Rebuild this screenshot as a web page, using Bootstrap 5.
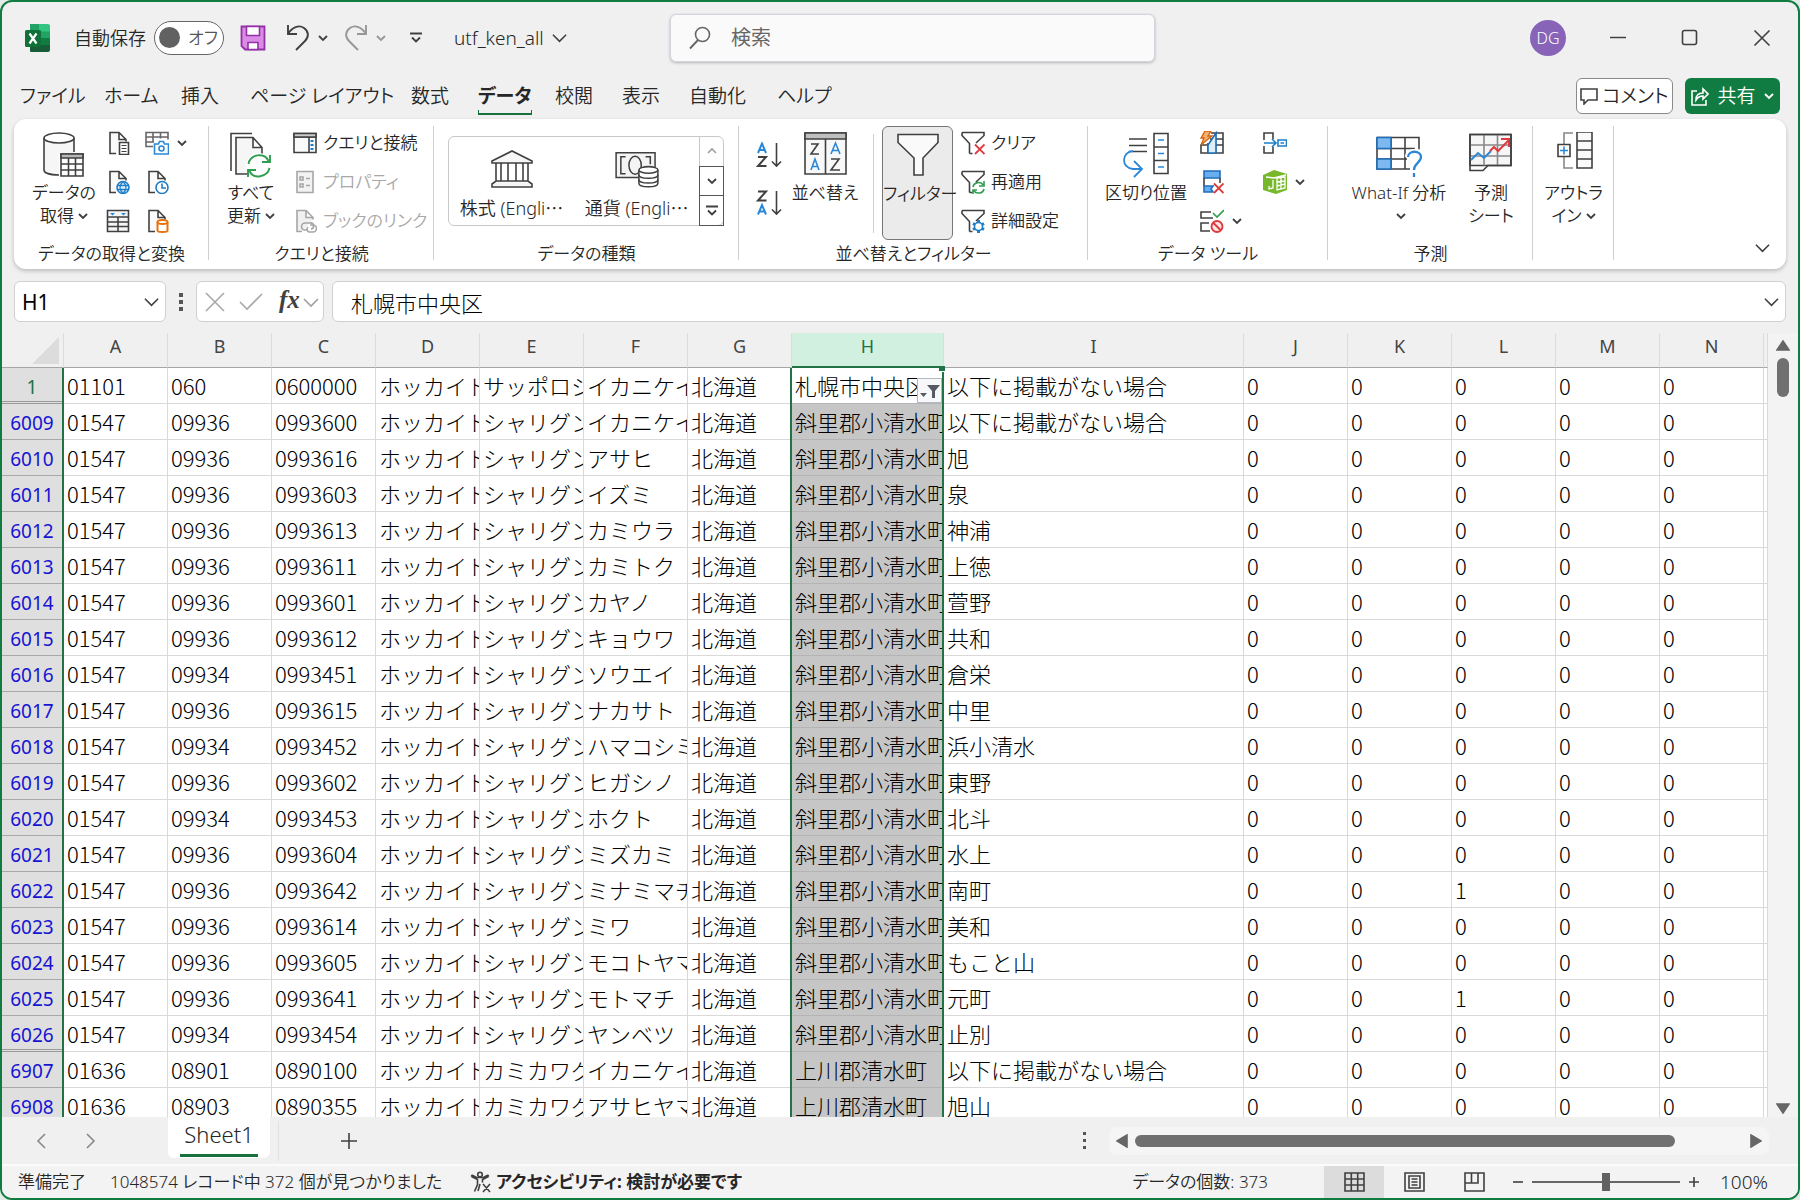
<!DOCTYPE html>
<html lang="ja">
<head>
<meta charset="utf-8">
<meta name="viewport" content="width=device-width, initial-scale=1">
<title>utf_ken_all - Excel</title>
<link href="https://cdn.jsdelivr.net/npm/bootstrap@5.3.0/dist/css/bootstrap.min.css" rel="stylesheet">
<style>
:root{--xl:#107c41;--ink:#262626;--blue:#2b88d8;--line:#d9d9d9}
body{background:#e3ebe6;font-family:"Noto Sans","Noto Sans CJK JP",sans-serif;font-size:18px;font-weight:350;line-height:24px;color:var(--ink)}
button{font:inherit;color:inherit;background:none;border:0;padding:0}
svg{flex:none;display:block;fill:none;stroke:#404040;stroke-width:1.6}
.appframe{border:2px solid var(--xl);border-radius:12px;background:#f0f0f0;overflow:hidden}
.appframe>*{flex-shrink:0}
.ui{font-feature-settings:"palt"}
/* title bar */
.titlebar{height:71px;padding:0 0 0 23px}
.autosave{width:70px;height:34px;border:1px solid #666;border-radius:17px;background:#fff;color:#555;font-size:17px;padding-left:4px;gap:8px}
.autosave input{appearance:none;width:21px;height:21px;border-radius:50%;background:#616161;margin:0}
.docname{font-size:19px}
.searchbox{position:absolute;left:50%;top:12px;width:27%;margin-left:-230px;height:48px;background:#fafafa;border:1px solid #d4d4dc;border-radius:6px;box-shadow:0 1px 3px rgba(0,0,0,.25);padding-left:18px;gap:20px}
.searchbox input,.fxinput,.namebox input{border:0;background:none;outline:0;min-width:0;padding:0}
.searchbox input{font-size:20px}
.searchbox input::placeholder{color:#666}
.avatar{width:36px;height:36px;border-radius:50%;background:#8764b8;color:#fff;font-size:16px}
.wbtn{width:72px;height:48px}
/* ribbon tabs */
.tabrow{height:46px;padding:0 18px}
.tabgrid{display:grid;grid-template-columns:84px 77px 69px 161px 67px 77px 67px 67px 88px 60px;font-size:19px;line-height:28px}
.tabgrid a{color:var(--ink);text-decoration:none;white-space:nowrap}
.tabgrid a.current span{display:inline-block;font-weight:700;box-shadow:0 4px 0 -1px #f0f0f0,0 5px 0 0 #18703c}
.combtn{width:97px;height:36px;border:1px solid #8a8a8a;border-radius:6px;background:#fff;font-size:19px}
.sharebtn{width:95px;height:36px;border-radius:6px;background:var(--xl);color:#fff;font-size:19px}
/* ribbon */
.ribbon{margin:0 12px;height:150px;background:#fff;border-radius:12px;box-shadow:0 2px 4px rgba(0,0,0,.22);font-size:17px}
.rgroup{position:relative;padding-top:7px}
.rgroup::after{content:"";position:absolute;right:0;top:7px;bottom:9px;border-right:1px solid #cfcfcf}
.rbody{height:115px}
.rlabel{text-align:center;line-height:26px}
.bigbtn{width:76px;align-self:flex-start;padding-top:6px;line-height:23px;white-space:nowrap}
.bigbtn svg{margin:0 auto 3px}
.bigbtn svg.chev{display:inline-block;margin:0 0 2px 4px}
.smallgrid{display:grid;grid-template-rows:repeat(3,34px);row-gap:5px;align-content:start;justify-content:start}
.smallgrid button{display:flex;align-items:center;gap:6px;white-space:nowrap}
.smallgrid button.wide{gap:8px}
.smallgrid button:disabled{color:#a8a8a8}
.gallery{width:276px;height:90px;margin:10px 0 0 14px;border:1px solid #c8c8c8;border-radius:6px}
.gallery .gitem{width:126px;font-size:18px;white-space:nowrap}
.gspin{width:24px}
.gspin button{flex:1;border-left:1px solid #c8c8c8}
.gspin button+button{border:1px solid #555;margin:0 -1px -1px 0}
.filterbtn{width:71px;border:1px solid #777;border-radius:6px;background:#ebebeb;padding-bottom:34px}
.filtersep{border-left:1px solid #d0d0d0;margin:8px 0 8px 10px}
/* formula bar */
.fbar{padding:12px 12px 11px;height:64px}
.fbox{height:41px;background:#fff;border:1px solid #d0d0d0;border-radius:6px}
.namebox{width:152px;padding:0 6px 0 7px}
.namebox input{width:100px;font-size:21px}
.fxtools{width:128px;gap:14px;padding-left:8px}
.fxline{padding:0 6px 0 18px}
.fxinput{font:300 22px/30px "Noto Sans CJK JP",sans-serif}
/* grid */
.gridwrap{min-height:0;overflow:hidden;flex:1 1 0}
.sheetgrid{table-layout:fixed;width:100%;border-collapse:separate;border-spacing:0;font:300 22px/34px "Noto Sans CJK JP",sans-serif;color:#000}
.sheetgrid td,.sheetgrid th{height:36px;padding:0;border-right:1px solid var(--line);border-bottom:1px solid var(--line);overflow:hidden;white-space:nowrap}
.sheetgrid td{background:#fff;padding-left:3px;padding-bottom:1px}
.sheetgrid thead th{height:35px;font:400 18px/26px "Noto Sans","Noto Sans CJK JP",sans-serif;color:#444;text-align:center;vertical-align:top;background:#f0f0f0;border-bottom:1px solid #a6a6a6;border-right-color:#dcdcdc}
.sheetgrid thead th.selcol{background:#d2f0e0;color:#217346;border-bottom:2px solid #217346}
.sheetgrid tbody th{background:#dfdfdf;color:#1414d2;font:400 19px/33px "Noto Sans",sans-serif;text-align:center;padding-top:3px;border-right:2px solid #217346;border-bottom:0;box-shadow:inset 0 -1px #a9a9a9}
.sheetgrid tbody tr.brk th{box-shadow:inset 0 -1px #999,inset 0 -2px #dfdfdf,inset 0 -3px #999}
.sheetgrid tbody tr:first-child th{color:#217346}
.sheetgrid td.colg{border-right:2px solid #217346;border-bottom:0;padding-bottom:2px;box-shadow:inset 0 -1px var(--line)}
.sheetgrid td.selcell{background:#c6c6c6;border-right:2px solid #217346;border-bottom:0;padding-bottom:2px;box-shadow:inset 0 -1px #b4b4b4;position:relative}
.sheetgrid tr:first-child td.selcell{background:#fff;overflow:visible}
.fillknob{position:absolute;right:-3px;top:-2px;width:6px;height:6px;background:#217346;border-bottom:1px solid #fff}
.filtmark{position:absolute;right:0;bottom:1px;width:25px;height:25px;background:#f8f8fa;border:1px solid #b4b8c4}
.selall svg{margin:4px 0 0 30px}
.vscroll{flex:0 0 30px;background:#f3f3f3;padding:7px 0 3px}
.vthumb{width:12px;height:39px;border-radius:6px;background:#707070;margin-top:7px}
/* bottom */
.sheetbar{height:47px;padding:0 29px 0 2px}
.sheettab{width:102px;height:41px;background:#fff;border-radius:0 0 6px 6px;font-size:22px;line-height:30px;margin-left:72px}
.sheettab span{display:inline-block;width:78px;height:38px;border-bottom:3px solid #18703c}
.htrack{width:660px;max-width:50%;height:28px;border-radius:8px;background:#f5f5f5;padding:0 7px}
.hthumb{width:540px;height:12px;border-radius:6px;background:#707070;margin-left:7px}
.statusbar{height:34px;background:#f3f3f3;border-top:2px solid #fbfbfb;padding:0 30px 0 16px;font-size:17px}
.viewbtn{width:60px;height:32px}
.viewbtn.on{background:#dcdcdc}
.zoomrange{appearance:none;width:148px;height:18px;background:linear-gradient(#666,#666) center/100% 2px no-repeat;margin:0 8px}
.zoomrange::-webkit-slider-thumb{appearance:none;width:8px;height:18px;background:#616161;border:0}
.zoompct{font-size:19px;margin-left:20px}
</style>
<script src="https://cdn.jsdelivr.net/npm/bootstrap@5.3.0/dist/js/bootstrap.bundle.min.js"></script>
</head>
<body>
<svg width="0" height="0" class="position-absolute">
<defs>
<symbol id="cv" viewBox="0 0 10 8"><path d="M1 2l4 4 4-4" stroke-width="1.8"/></symbol>
<symbol id="cvl" viewBox="0 0 16 10"><path d="M1 1.500l7 7 7-7" stroke-width="1.7"/></symbol>
<symbol id="funnel" viewBox="0 0 24 24"><path d="M1 1.500h22v3L15 12M8.500 22.500v-10L1 4.500v-3M8.500 22.500h3"/></symbol>
<symbol id="page" viewBox="0 0 24 24"><path d="M10 22.500H4V1.500h9l7 7v2M13 1.500v7h7" fill="#fafafa"/></symbol>
</defs>
</svg>
<div class="appframe vh-100 d-flex flex-column ui">

<header class="titlebar d-flex align-items-center position-relative">
  <svg width="25" height="28" viewBox="0 0 25 28" style="stroke:none"><path d="M5 0h10v9H5z" fill="#21a366"/><path d="M14 0h9a2 2 0 0 1 2 2v6H14z" fill="#33c481"/><path d="M14 7.500h11v7H14z" fill="#21a366"/><path d="M5 7.500h10v7H5z" fill="#107c41"/><path d="M14 14h11v7H14z" fill="#107c41"/><path d="M5 14h10v7h10v5a2 2 0 0 1-2 2H6a1 1 0 0 1-1-1z" fill="#185c37"/><rect y="6" width="16" height="17" rx="1.500" fill="#0f7038"/><path d="M4.500 9.500L11.500 19.500M11.500 9.500L4.500 19.500" stroke="#fff" stroke-width="2.200"/></svg>
  <label for="autosave" class="ms-4">自動保存</label>
  <label class="autosave d-flex align-items-center ms-2"><input type="checkbox" role="switch" id="autosave"><span>オフ</span></label>
  <button class="ms-3" aria-label="上書き保存"><svg width="26" height="26" viewBox="0 0 25 26"><path d="M1 1.500h23v23H4.500L1 21z" fill="#d98be6" stroke="#9332a5" stroke-width="1.800"/><path d="M6 1.500h13v9H6z" fill="#fff" stroke="#9332a5"/><path d="M7.500 24.500v-7h10v7z" fill="#fff" stroke="#9332a5"/></svg></button>
  <button class="ms-3 ps-1 d-flex align-items-center gap-2" aria-label="元に戻す"><svg width="24" height="28" viewBox="0 0 24 28"><path d="M2 1v9h9M2 10C6 3 13 .500 18 4s5 9 1 13L10 26" stroke-width="1.900"/></svg><svg class="chev" width="10" height="8"><use href="#cv"/></svg></button>
  <button class="ms-3 d-flex align-items-center gap-2 opacity-50" aria-label="やり直し" disabled><svg width="24" height="28" viewBox="0 0 24 28"><path d="M22 1v9h-9M22 10C18 3 11 .500 6 4s-5 9-1 13l9 9" stroke-width="1.900"/></svg><svg class="chev" width="10" height="8"><use href="#cv"/></svg></button>
  <button class="ms-4" aria-label="クイック アクセス ツール バー"><svg width="12" height="12" viewBox="0 0 12 12"><path d="M0 1.500h12M2 5.500l4 4 4-4" stroke-width="1.900"/></svg></button>
  <button class="docname d-flex align-items-center gap-2 ms-4 ps-2">utf_ken_all<svg width="15" height="10"><use href="#cvl"/></svg></button>
  <div class="searchbox d-flex align-items-center"><svg width="22" height="24" viewBox="0 0 22 24"><circle cx="13.500" cy="8.500" r="7" stroke="#666"/><path d="M9 14L1 22.500" stroke="#666" stroke-width="1.900"/></svg><input type="text" class="flex-grow-1" placeholder="検索" aria-label="検索"></div>
  <div class="d-flex align-items-center ms-auto">
    <button class="avatar me-3">DG</button>
    <button class="wbtn d-flex align-items-center justify-content-center" aria-label="最小化"><svg width="18" height="18"><path d="M1 8.500h16"/></svg></button>
    <button class="wbtn d-flex align-items-center justify-content-center" aria-label="最大化"><svg width="18" height="18"><rect x="1.500" y="1.500" width="14" height="14" rx="2"/></svg></button>
    <button class="wbtn d-flex align-items-center justify-content-center" aria-label="閉じる"><svg width="18" height="18"><path d="M1.500 1.500l15 15M16.500 1.500l-15 15"/></svg></button>
  </div>
</header>

<div class="tabrow d-flex align-items-center">
  <nav class="tabgrid"><a href="#">ファイル</a><a href="#">ホーム</a><a href="#">挿入</a><a href="#">ページ レイアウト</a><a href="#">数式</a><a href="#" class="current"><span>データ</span></a><a href="#">校閲</a><a href="#">表示</a><a href="#">自動化</a><a href="#">ヘルプ</a></nav>
  <div class="d-flex ms-auto">
    <button class="combtn d-flex align-items-center justify-content-center gap-1 me-2"><svg width="18" height="18" viewBox="0 0 18 18"><path d="M1 2h16v11H8l-4 4v-4H1z"/></svg>コメント</button>
    <button class="sharebtn d-flex align-items-center justify-content-center gap-2 ms-1"><svg width="18" height="19" viewBox="0 0 18 19"><path d="M6 4H1v14h14v-5M5 13c0-5 3-7 7-7V2l5 5-5 5V9c-3 0-5 1-7 4z" stroke="#fff"/></svg>共有<svg class="chev" width="10" height="8" style="stroke:#fff"><use href="#cv"/></svg></button>
  </div>
</div>

<section class="ribbon d-flex">
  <div class="rgroup" style="width:195px">
    <div class="rbody d-flex ps-2">
      <button class="bigbtn ms-1"><svg width="46" height="46" viewBox="0 0 46 46"><path d="M3 6v32c0 3 6 5 15 5V22h15V6z" fill="#f6f6f6" stroke="none"/><path d="M3 6v32c0 3 6 5 15 5M33 6v14"/><ellipse cx="18" cy="6" rx="15" ry="5" fill="#fff"/><path d="M20 22h22v22H20z" fill="#fff"/><path d="M20 22h22v4H20z" fill="#b8b8b8"/><path d="M20 32h22M20 38h22M27.500 26v18M34.500 26v18"/></svg>データの<br>取得<svg class="chev" width="10" height="8"><use href="#cv"/></svg></button>
      <div class="smallgrid ms-1" style="grid-template-columns:24px 50px;column-gap:15px">
        <button aria-label="テキストまたは CSV から"><svg width="24" height="24"><use href="#page"/><path d="M13.500 11.500h9v12h-9z" fill="#fff"/><path d="M15.500 14.500h5M15.500 17.500h5M15.500 20.500h5" stroke-width="1.200"/></svg></button>
        <button class="wide" aria-label="画像から"><svg width="24" height="24"><path d="M8 15.500H1v-14h22v7M1 6h22M1 11h8M8 1.500v10M15.500 1.500v6" stroke="#666"/><path d="M9.500 13h4l1-2.500h4l1 2.500h4v10h-14z" fill="#fff" stroke="#2b88d8"/><circle cx="16.500" cy="17.500" r="2.500" stroke="#2b88d8"/></svg><svg class="chev" width="10" height="8"><use href="#cv"/></svg></button>
        <button aria-label="Web から"><svg width="24" height="24"><use href="#page"/><circle cx="17" cy="17.500" r="6" fill="#e2f1fb" stroke="#1e7ec8"/><path d="M11 15.500h12M11 19.500h12M17 11.500c-4 4-4 8 0 12M17 11.500c4 4 4 8 0 12" stroke="#1e7ec8" stroke-width="1.300"/></svg></button>
        <button aria-label="最近使ったソース"><svg width="24" height="24"><use href="#page"/><circle cx="17" cy="17.500" r="6" fill="#fff" stroke="#1e7ec8"/><path d="M17 13.500v4.500h4" stroke="#1e7ec8"/></svg></button>
        <button aria-label="テーブルまたは範囲から"><svg width="24" height="24"><path d="M1.500 1.500h21v21h-21z" fill="#f4f4f4"/><path d="M1.500 8h21M1.500 13h21M1.500 17.500h21M12 8v14.500"/><path d="M4 4h5L6.500 6.500zM15 4h5l-2.500 2.500z" fill="#2b88d8" stroke="none"/></svg></button>
        <button aria-label="既存の接続"><svg width="24" height="24"><use href="#page"/><path d="M12.500 13v8.500c0 2 10 2 10 0V13" fill="#fff" stroke="#e8710a" stroke-width="2"/><ellipse cx="17.500" cy="13" rx="5" ry="2" fill="#fff" stroke="#e8710a" stroke-width="2"/></svg></button>
      </div>
    </div>
    <div class="rlabel">データの取得と変換</div>
  </div>
  <div class="rgroup" style="width:225px">
    <div class="rbody d-flex ps-1">
      <button class="bigbtn"><svg width="46" height="46" viewBox="0 0 46 46"><path d="M3 39V1.500h21"/><path d="M24 42H8V5.500h17l9 10v7M25 5.500v10h9" fill="#f6f6f6"/><circle cx="31" cy="34" r="13" fill="#fff" stroke="none"/><path d="M20.500 32c1.500-10 16-12 20-3M42 23v7h-8M41.500 36c-2 9-16 12-20 3M20 45v-7h8" stroke="#2f9e4f" stroke-width="1.900"/></svg>すべて<br>更新<svg class="chev" width="10" height="8"><use href="#cv"/></svg></button>
      <div class="smallgrid ms-1">
        <button><svg width="24" height="24"><path d="M1 2.500h22v19H1zM1 6h22" fill="#fafafa"/><path d="M1 2.500h22V6H1z" fill="#ccc"/><path d="M16 6v15.500"/><path d="M19 9v2m0 2v2m0 2v2" stroke="#1e7ec8" stroke-width="3"/></svg>クエリと接続</button>
        <button disabled><svg width="24" height="24" style="stroke:#a6a6a6"><path d="M4 1.500h16v21H4z" fill="#f2f2f2"/><path d="M7 7h3v3H7zM7 14h3v3H7zM13 8.500h4M13 15.500h4"/></svg>プロパティ</button>
        <button disabled><svg width="24" height="24" style="stroke:#a6a6a6"><path d="M9 22.500H4V1.500h9l7 7v2M13 1.500v7h7" fill="#f0f0f0"/><path d="M14 21h-2a3 3 0 0 1 0-7h5a3 3 0 0 1 1 6M17 16h3a3 3 0 0 1 0 7h-4a3 3 0 0 1-1-5"/></svg>ブックのリンク</button>
      </div>
    </div>
    <div class="rlabel">クエリと接続</div>
  </div>
  <div class="rgroup" style="width:305px">
    <div class="rbody d-flex align-items-start">
      <div class="gallery d-flex">
        <button class="gitem"><svg class="mx-auto mt-2" width="42" height="38" viewBox="0 0 42 38"><path d="M1 11L21 1l20 10v2H1zM5 13v18M10 13v18M17 13v18M25 13v18M32 13v18M37 13v18M5 31h32l4 3v3H1v-3z" fill="#f6f6f6"/></svg><span class="d-block mt-2">株式 (Engli⋯</span></button>
        <button class="gitem"><svg class="mx-auto mt-2" width="46" height="38" viewBox="0 0 46 40"><path d="M1 3h41v26H1z" fill="#f4f4f4"/><path d="M11 7H6v18h5M32 7h5v8"/><ellipse cx="21" cy="16" rx="6.500" ry="9.500"/><path d="M25 21v14c0 5 20 5 20 0V21" fill="#fff"/><ellipse cx="35" cy="21" rx="10" ry="3.500" fill="#fff"/><path d="M25 26c0 5 20 5 20 0M25 31c0 5 20 5 20 0"/></svg><span class="d-block mt-2">通貨 (Engli⋯</span></button>
        <div class="gspin d-flex flex-column ms-auto">
          <button aria-label="上へ" disabled><svg class="mx-auto opacity-50" width="10" height="8"><path d="M1 6l4-4 4 4"/></svg></button>
          <button aria-label="下へ"><svg class="mx-auto" width="10" height="8"><use href="#cv"/></svg></button>
          <button aria-label="その他"><svg class="mx-auto" width="12" height="12" viewBox="0 0 12 12"><path d="M0 1.500h12M2 5.500l4 4 4-4" stroke-width="1.900"/></svg></button>
        </div>
      </div>
    </div>
    <div class="rlabel">データの種類</div>
  </div>
  <div class="rgroup" style="width:349px">
    <div class="rbody d-flex ps-3">
      <div class="d-flex flex-column pt-3" style="gap:22px">
        <button aria-label="昇順"><svg width="28" height="26" viewBox="0 0 28 26"><path d="M3 11L7 1.500 11 11M4.500 8h5" stroke="#2b88d8" stroke-width="2"/><path d="M3 15h8L3 24h8.500" stroke-width="2"/><path d="M21.500 1v23M17 19.500l4.500 4.500 4.500-4.500"/></svg></button>
        <button aria-label="降順"><svg width="28" height="26" viewBox="0 0 28 26"><path d="M3 1.500h8L3 10.500h8.500" stroke-width="2"/><path d="M3 24.500L7 15 11 24.500M4.500 21.500h5" stroke="#2b88d8" stroke-width="2"/><path d="M21.500 1v23M17 19.500l4.500 4.500 4.500-4.500"/></svg></button>
      </div>
      <button class="bigbtn ms-1"><svg width="46" height="46" viewBox="0 0 46 46"><path d="M3 1h41v41H3z" fill="#f8f8f8"/><path d="M3 1h41v6H3z" fill="#bfbfbf"/><path d="M23.500 7v35M9 12h7l-7 10h8"/><path d="M9 38l4-11 4 11M10.500 34.500h5M29 22l4.500-11L38 22M30.500 18.500h6" stroke="#2b88d8"/><path d="M29 27h8l-8 11h9"/></svg>並べ替え</button>
      <div class="filtersep"></div>
      <button class="bigbtn filterbtn ms-2"><svg width="46" height="46" viewBox="0 0 46 46"><path d="M3 1.500h40v8L28 25v17h-9V25L3 9.500z" fill="#fafafa"/></svg>フィルター</button>
      <div class="smallgrid ms-2">
        <button><svg width="24" height="24"><use href="#funnel"/><path d="M14 13.500l9.500 9.500M23.500 13.500L14 23" stroke="#e03a3e" stroke-width="1.800"/></svg>クリア</button>
        <button><svg width="24" height="24"><use href="#funnel"/><path d="M12 17c1-5 8-6 10-2M23 11v5h-5M23 19c-1 5-8 5-10 2M12 24v-4h4" stroke="#2f9e4f"/></svg>再適用</button>
        <button><svg width="24" height="24"><use href="#funnel"/><path d="M17.500 11v13M12 14.500l11 6M12 20.500l11-6" stroke="#1e7ec8" stroke-width="3"/><circle cx="17.500" cy="17.500" r="4" stroke="#1e7ec8" fill="#fff"/></svg>詳細設定</button>
      </div>
    </div>
    <div class="rlabel">並べ替えとフィルター</div>
  </div>
  <div class="rgroup" style="width:240px">
    <div class="rbody d-flex ps-3">
      <button class="bigbtn" style="width:84px"><svg width="46" height="46" viewBox="0 0 46 46"><path d="M6 7h18M6 13.500h18M6 19.500h18"/><path d="M31 1.500h14v40H31zM31 15h14M31 28.500h14"/><path d="M35 8h6M35 21.500h6M35 35h6" stroke="#2b88d8"/><path d="M10 19C-2 20-2 36 10 37h8M11 29l8 8-8 8" stroke="#2b88d8" stroke-width="1.800"/></svg>区切り位置</button>
      <div class="smallgrid" style="grid-template-columns:63px 50px;margin-left:12px">
        <button aria-label="フラッシュ フィル"><svg width="24" height="24"><path d="M11 2h12v20H1v-8h22M8 12v10M15.500 2v20M10 8h13"/><path d="M12 8l4-6v20H8v-8z" fill="#dbeefb" stroke="#1e6fb8"/><path d="M5 0h6L8 5h4L1 14l3-7H1z" fill="#f0b070" stroke="#d8600a" stroke-width="1.300"/></svg></button>
        <button aria-label="統合"><svg width="24" height="24"><path d="M1 8V2h9v6M1 16v6h9v-6M1 8v1M1 15v1"/><path d="M1 12h11M9 8l4 4-4 4M15 9h8.500v6H15zM17.500 12H21" stroke="#1e7ec8"/></svg></button>
        <button aria-label="重複の削除"><svg width="24" height="24"><path d="M4 1h16v7H4z" fill="#69aef0" stroke="#1e6fb8"/><path d="M4 8v8M20 8v5"/><path d="M4 16h9l-2 3 2 3H4z" fill="#69aef0" stroke="#1e6fb8"/><path d="M14 13.500l9.500 9.500M23.500 13.500L14 23" stroke="#e03a3e" stroke-width="1.800"/></svg></button>
        <button class="wide" aria-label="データ モデル"><svg width="24" height="24" viewBox="0 0 24 24"><path d="M0 5L11 0l13 4v16l-11 4L0 20z" fill="#76b82a" stroke="none"/><path d="M10 10v8l-4 1v-3M14 8l8-1v11l-8 2zM18 7.500V19M14 12l8-1M14 16l8-2M3 7l8 1 12-3" stroke="#fff" stroke-width="1.300"/></svg><svg class="chev" width="10" height="8"><use href="#cv"/></svg></button>
        <button class="wide" aria-label="データの入力規則"><svg width="24" height="24"><path d="M11 3H1v6h12M9 14H1v8h9"/><path d="M13 4l4 4 7-7" stroke="#2f9e4f"/><circle cx="17" cy="17.500" r="5.500" fill="#fbe6e6" stroke="#e03a3e" stroke-width="1.900"/><path d="M13 13.500l8 8" stroke="#e03a3e" stroke-width="1.900"/></svg><svg class="chev" width="10" height="8"><use href="#cv"/></svg></button>
      </div>
    </div>
    <div class="rlabel">データ ツール</div>
  </div>
  <div class="rgroup" style="width:205px">
    <div class="rbody d-flex" style="padding-left:13px">
      <button class="bigbtn" style="width:116px"><svg width="46" height="46" viewBox="0 0 46 46"><path d="M1 5.500h42v12M34 37H1V5.500M1 16.500h38M1 27h30M15 5.500V37M29 5.500V37"/><path d="M1 5.500h14v11H1zM1 27h14v10H1z" fill="#7db8f0" stroke="#1e6fb8"/><path d="M32 25c0-7 14-7 14 0 0 6-8 6-8 13M38 41v4" stroke="#fff" stroke-width="6"/><path d="M32 25c0-7 13-7 13 0 0 6-7 6-7 13M38 41v4" stroke="#2b88d8" stroke-width="2.300"/></svg>What-If 分析<br><svg class="chev" width="10" height="8"><use href="#cv"/></svg></button>
      <button class="bigbtn ms-1" style="width:60px"><svg width="46" height="46" viewBox="0 0 46 46"><path d="M2 2.500h41v31H2z" fill="#f6f6f6"/><path d="M2 13h41M2 24h41M16 2.500v31M29.500 2.500v31" stroke="#888"/><path d="M2 2.500v36h13l5-5h23v-31z"/><path d="M3 28l7-7 6 5 7-7" stroke="#2b88d8" stroke-width="2"/><path d="M22 19l4-4 4 4L41 8M33 7h8v8" stroke="#e03a3e" stroke-width="2"/></svg>予測<br>シート</button>
    </div>
    <div class="rlabel">予測</div>
  </div>
  <div class="rgroup" style="width:81px">
    <div class="rbody"><button class="bigbtn mx-auto d-block"><svg width="46" height="46" viewBox="0 0 46 46"><path d="M26 0h15v36H26zM26 9h15M26 18h15M26 27h15" fill="#fafafa"/><path d="M22 1h-9v11M13 25v11h9" stroke="#888"/><path d="M7 12.500h12v12H7z"/><path d="M13 14.500v8M9 18.500h8" stroke="#2b88d8"/></svg>アウトラ<br>イン<svg class="chev" width="10" height="8"><use href="#cv"/></svg></button></div>
  </div>
  <button class="ms-auto align-self-end me-3 mb-3" aria-label="リボンを折りたたむ"><svg width="15" height="10"><use href="#cvl"/></svg></button>
</section>

<div class="fbar d-flex align-items-center">
  <div class="fbox namebox d-flex align-items-center justify-content-between"><input type="text" value="H1" aria-label="名前ボックス"><svg width="15" height="10"><use href="#cvl"/></svg></div>
  <svg class="mx-2" width="14" height="18" style="fill:#555;stroke:none"><path d="M5 0h4v4H5zM5 7h4v4H5zM5 14h4v4H5z"/></svg>
  <div class="fbox fxtools d-flex align-items-center"><svg width="20" height="20" style="stroke:#a8a8a8"><path d="M1 1l18 18M19 1L1 19" stroke="#a8a8a8"/></svg><svg width="24" height="18"><path d="M1 9l7 7L23 1" stroke="#a8a8a8"/></svg><svg width="42" height="26" viewBox="0 0 42 26" aria-label="関数の挿入"><text x="2" y="19" font-family="Liberation Serif" font-style="italic" font-weight="700" font-size="25" fill="#404040" stroke="none">fx</text><path d="M27 10l7 7 7-7" stroke="#a0a0a0"/></svg></div>
  <div class="fbox fxline flex-grow-1 ms-2 d-flex align-items-center"><input class="fxinput flex-grow-1" type="text" value="札幌市中央区" aria-label="数式バー"><svg width="15" height="10"><use href="#cvl"/></svg></div>
</div>

<main class="gridwrap d-flex">
  <div class="flex-grow-1 overflow-hidden">
  <table class="sheetgrid" id="grid">
    <colgroup><col style="width:62px"><col span="7" style="width:104px"><col style="width:152px"><col style="width:300px"><col span="5" style="width:104px"><col></colgroup>
    <thead><tr><th class="selall"><svg width="27" height="27"><path d="M27 0v27H0z" fill="#dcdcdc" stroke="none"/></svg></th><th>A</th><th>B</th><th>C</th><th>D</th><th>E</th><th>F</th><th>G</th><th class="selcol">H</th><th>I</th><th>J</th><th>K</th><th>L</th><th>M</th><th>N</th><th></th></tr></thead>
    <tbody></tbody>
  </table>
  </div>
  <div class="vscroll d-flex flex-column align-items-center"><button aria-label="上へスクロール"><svg width="14" height="11"><path d="M7 1l6 9H1z" fill="#666" stroke="#666"/></svg></button><div class="vthumb"></div><button class="mt-auto" aria-label="下へスクロール"><svg width="14" height="11"><path d="M7 10l6-9H1z" fill="#666" stroke="#666"/></svg></button></div>
</main>

<div class="sheetbar d-flex align-items-center">
  <button class="ms-4 ps-2" aria-label="前のシート"><svg width="10" height="16"><path d="M9 1L2 8l7 7" stroke="#888"/></svg></button>
  <button class="ms-4 ps-3" aria-label="次のシート"><svg width="10" height="16"><path d="M1 1l7 7-7 7" stroke="#888"/></svg></button>
  <button class="sheettab align-self-start"><span>Sheet1</span></button>
  <div class="border-start ms-2 me-4 py-2">&nbsp;</div>
  <button class="ms-4 ps-2" aria-label="新しいシート"><svg width="18" height="18"><path d="M9 1v16M1 9h16"/></svg></button>
  <svg class="ms-auto" width="4" height="17" style="fill:#555;stroke:none"><path d="M0 0h3v3H0zM0 7h3v3H0zM0 14h3v3H0z"/></svg>
  <div class="htrack d-flex align-items-center" style="margin-left:22px"><button aria-label="左へスクロール"><svg width="12" height="14"><path d="M1 7l10-6v12z" fill="#666" stroke="#666"/></svg></button><div class="hthumb"></div><button class="ms-auto" aria-label="右へスクロール"><svg width="12" height="14"><path d="M11 7L1 1v12z" fill="#666" stroke="#666"/></svg></button></div>
</div>

<footer class="statusbar d-flex align-items-center">
  <span>準備完了</span><span class="ms-4">1048574 レコード中 372 個が見つかりました</span>
  <button class="d-flex align-items-center gap-1 ms-4 ps-1 fw-bold"><svg width="22" height="22" viewBox="0 0 22 22"><circle cx="10" cy="3.500" r="2.300"/><path d="M1.500 5.500l6 3v5l-3 7M18.500 5.500l-6 3v3M1.500 5.500c0-2 2-1 5 1h7c3-2 5-3 5-1M10 13l-2 7M13 13l7 8M20 13l-7 8"/></svg>アクセシビリティ: 検討が必要です</button>
  <span class="ms-auto me-5">データの個数: 373</span>
  <button class="viewbtn on d-flex align-items-center justify-content-center ms-2" aria-label="標準"><svg width="21" height="20"><path d="M1 1h19v18H1zM1 7h19M1 13h19M7.300 1v18M13.700 1v18"/></svg></button>
  <button class="viewbtn d-flex align-items-center justify-content-center" aria-label="ページ レイアウト"><svg width="21" height="20"><path d="M1 1h19v18H1zM5 4h11v12H5zM7.500 7h6M7.500 10h6M7.500 13h6"/></svg></button>
  <button class="viewbtn d-flex align-items-center justify-content-center" aria-label="改ページ プレビュー"><svg width="21" height="20"><path d="M1 1h19v18H1zM1 11h13V1M7.500 1v10"/></svg></button>
  <button class="ms-2" aria-label="縮小"><svg width="12" height="12"><path d="M1 6h10"/></svg></button>
  <input class="zoomrange" type="range" min="0" max="100" value="50" aria-label="ズーム">
  <button aria-label="拡大"><svg width="12" height="12"><path d="M1 6h10M6 1v10"/></svg></button>
  <button class="zoompct">100%</button>
</footer>
</div>

<script>
const S='シャリグンコシミズチョウ', K='カミカワグンシミズチョウ', N='イカニケイサイガナイバアイ', n='以下に掲載がない場合';
const rows=[
 ['1','01101','060','0600000','サッポロシチュウオウク',N,'札幌市中央区',n],
 ['6009','01547','09936','0993600',S,N,0,n],
 ['6010','01547','09936','0993616',S,'アサヒ',0,'旭'],
 ['6011','01547','09936','0993603',S,'イズミ',0,'泉'],
 ['6012','01547','09936','0993613',S,'カミウラ',0,'神浦'],
 ['6013','01547','09936','0993611',S,'カミトク',0,'上徳'],
 ['6014','01547','09936','0993601',S,'カヤノ',0,'萱野'],
 ['6015','01547','09936','0993612',S,'キョウワ',0,'共和'],
 ['6016','01547','09934','0993451',S,'ソウエイ',0,'倉栄'],
 ['6017','01547','09936','0993615',S,'ナカサト',0,'中里'],
 ['6018','01547','09934','0993452',S,'ハマコシミズ',0,'浜小清水'],
 ['6019','01547','09936','0993602',S,'ヒガシノ',0,'東野'],
 ['6020','01547','09934','0993453',S,'ホクト',0,'北斗'],
 ['6021','01547','09936','0993604',S,'ミズカミ',0,'水上'],
 ['6022','01547','09936','0993642',S,'ミナミマチ',0,'南町','1'],
 ['6023','01547','09936','0993614',S,'ミワ',0,'美和'],
 ['6024','01547','09936','0993605',S,'モコトヤマ',0,'もこと山'],
 ['6025','01547','09936','0993641',S,'モトマチ',0,'元町','1'],
 ['6026','01547','09934','0993454',S,'ヤンベツ',0,'止別'],
 ['6907','01636','08901','0890100',K,N,'上川郡清水町',n],
 ['6908','01636','08903','0890355',K,'アサヒヤマ','上川郡清水町','旭山']
];
const mark='<span class="fillknob"></span><button class="filtmark" aria-label="フィルター"><svg width="23" height="23" viewBox="0 0 23 23"><path d="M9 6h13l-5 6v7h-3v-7z" fill="#555b66" stroke="none"/><path d="M2 14h7l-3.500 4z" fill="#555b66" stroke="none"/></svg></button>';
document.querySelector('#grid tbody').innerHTML=rows.map((r,i)=>{
  const t=v=>'<td>'+v+'</td>';
  return '<tr'+(r[0]=='1'||r[0]=='6026'?' class="brk"':'')+'><th>'+r[0]+'</th>'+t(r[1])+t(r[2])+t(r[3])+t('ホッカイドウ')+t(r[4])+t(r[5])+'<td class="colg">北海道</td><td class="selcell">'+(r[6]||'斜里郡小清水町')+(i?'':mark)+'</td>'+t(r[7])+t(0)+t(0)+t(r[8]||0)+t(0)+t(0)+t('')+'</tr>';
}).join('');
</script>
</body>
</html>
